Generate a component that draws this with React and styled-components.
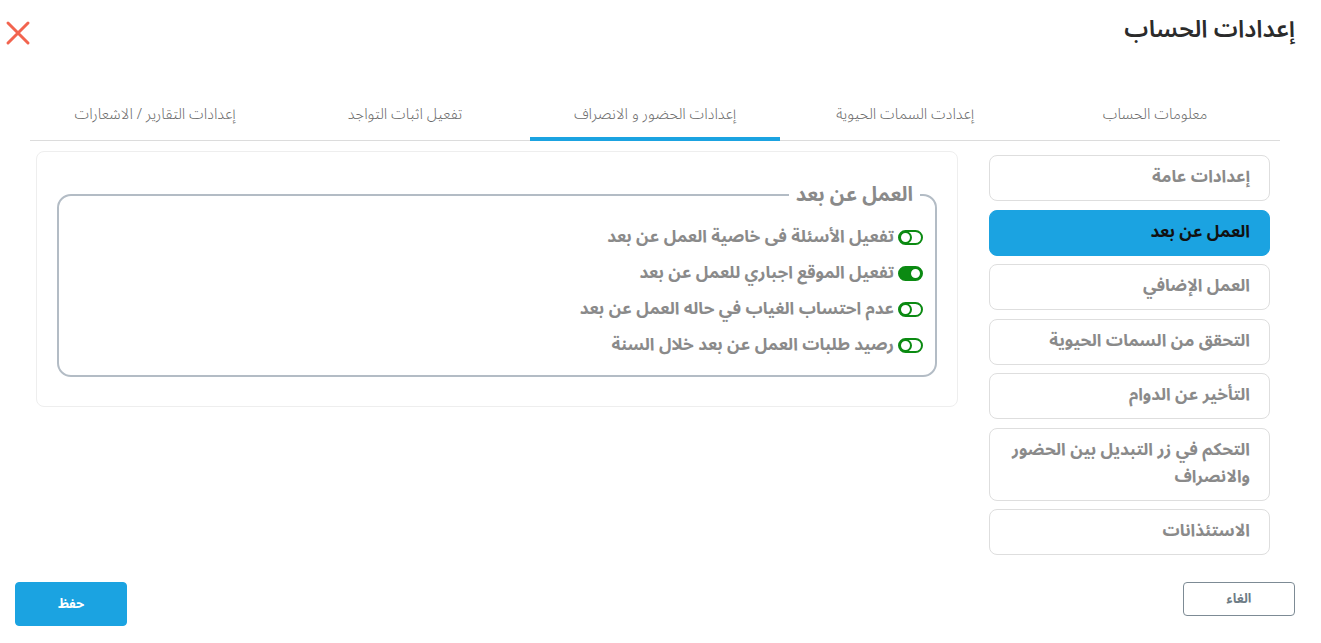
import React, { useState } from "react";
import styled, { createGlobalStyle } from "styled-components";

const Global = createGlobalStyle`
  html, body { margin: 0; padding: 0; background: #fff; }
  body { font-family: "Noto Sans Arabic", "DejaVu Sans", "Noto Sans", sans-serif; }
  * { box-sizing: border-box; }
`;

const Page = styled.div`
  direction: rtl;
  width: 1321px;
  height: 643px;
  display: flex;
  flex-direction: column;
  background: #fff;
`;

const Header = styled.header`
  display: flex;
  justify-content: space-between;
  align-items: flex-start;
  padding: 12px 26px 0 5px;
  height: 95px;
`;

const Title = styled.h1`
  margin: 0;
  font-size: 24px;
  font-weight: 600;
  color: #2b2b2b;
  line-height: 36px;
`;

const CloseBtn = styled.button`
  border: 0;
  background: none;
  padding: 0;
  margin-top: 8px;
  width: 26px;
  height: 26px;
  cursor: pointer;
  display: flex;
`;

const Tabs = styled.nav`
  display: grid;
  grid-template-columns: repeat(5, 250px);
  margin: 0 41px 0 30px;
  border-bottom: 1px solid #dcdcdc;
`;

const Tab = styled.div`
  height: 46px;
  display: flex;
  align-items: center;
  justify-content: center;
  padding-bottom: 4px;
  font-size: 15px;
  font-weight: 300;
  color: #6a6a6a;
  border-bottom: 4px solid ${(p) => (p.$active ? "#1ba3e1" : "transparent")};
  margin-bottom: -1px;
`;

const Body = styled.div`
  display: grid;
  grid-template-columns: 281px 922px;
  column-gap: 31px;
  padding: 10px 51px 0 36px;
  align-items: start;
`;

const Side = styled.div`
  display: flex;
  flex-direction: column;
  gap: 8.5px;
  padding-top: 4px;
`;

const SideItem = styled.div`
  min-height: 46px;
  border-radius: 8px;
  border: 1px solid ${(p) => (p.$active ? "#1ba3e1" : "#dedede")};
  background: ${(p) => (p.$active ? "#1ba3e1" : "#fff")};
  color: ${(p) => (p.$active ? "#111" : "#8a8a8a")};
  font-size: 17px;
  font-weight: 700;
  line-height: 27px;
  padding: 8px 19px 9px 12px;
  display: flex;
  align-items: center;
`;

const Panel = styled.div`
  border: 1px solid #eeeeee;
  border-radius: 8px;
  height: 256px;
  padding: 30px 20px 0 20px;
`;

const Fieldset = styled.fieldset`
  margin: 0;
  border: 2px solid #b3bcc5;
  border-radius: 14px;
  padding: 11px 12px 9px 12px;
  height: 195px;
`;

const Legend = styled.legend`
  font-size: 20px;
  font-weight: 700;
  color: #8a8a8a;
  padding: 0 7px;
  margin-right: 3px;
  line-height: 26px;
`;

const Rows = styled.div`
  display: flex;
  flex-direction: column;
`;

const Row = styled.label`
  display: flex;
  align-items: center;
  gap: 4px;
  height: 36px;
  font-size: 17px;
  font-weight: 700;
  color: #8a8a8a;
  cursor: pointer;
`;

const Toggle = styled.span`
  width: 25px;
  height: 15px;
  border-radius: 8px;
  border: 2px solid #0b8a12;
  background: ${(p) => (p.$on ? "#0b8a12" : "#fff")};
  display: flex;
  flex-direction: ${(p) => (p.$on ? "row" : "row-reverse")};
  justify-content: flex-start;
  align-items: center;
  flex-shrink: 0;
  direction: rtl;
`;

const Knob = styled.span`
  width: 13px;
  height: 13px;
  margin: -1px;
  border-radius: 50%;
  background: #fff;
  border: 2px solid #0b8a12;
`;

const Footer = styled.footer`
  margin-top: auto;
  display: flex;
  justify-content: space-between;
  align-items: flex-start;
  padding: 0 26px 17px 15px;
`;

const Button = styled.button`
  width: 112px;
  height: ${(p) => (p.$primary ? "44px" : "34px")};
  border-radius: 4px;
  font-family: inherit;
  font-size: 13px;
  font-weight: 700;
  cursor: pointer;
  border: 1px solid ${(p) => (p.$primary ? "#1ba3e1" : "#7d8b95")};
  background: ${(p) => (p.$primary ? "#1ba3e1" : "#fff")};
  color: ${(p) => (p.$primary ? "#fff" : "#6e7c86")};
`;

const tabs = [
  "معلومات الحساب",
  "إعدادت السمات الحيوية",
  "إعدادات الحضور و الانصراف",
  "تفعيل اثبات التواجد",
  "إعدادات التقارير / الاشعارات",
];

const sideItems = [
  "إعدادات عامة",
  "العمل عن بعد",
  "العمل الإضافي",
  "التحقق من السمات الحيوية",
  "التأخير عن الدوام",
  "التحكم في زر التبديل بين الحضور والانصراف",
  "الاستئذانات",
];

const options = [
  { label: "تفعيل الأسئلة فى خاصية العمل عن بعد", on: false },
  { label: "تفعيل الموقع اجباري للعمل عن بعد", on: true },
  { label: "عدم احتساب الغياب في حاله العمل عن بعد", on: false },
  { label: "رصيد طلبات العمل عن بعد خلال السنة", on: false },
];

export default function App() {
  const [opts, setOpts] = useState(options);
  return (
    <Page>
      <Global />
      <Header>
        <Title>إعدادات الحساب</Title>
        <CloseBtn aria-label="close">
          <svg width="26" height="26" viewBox="0 0 26 26">
            <path d="M3 3 L23 23 M23 3 L3 23" stroke="#f2644f" strokeWidth="3" strokeLinecap="round" />
          </svg>
        </CloseBtn>
      </Header>
      <Tabs>
        {tabs.map((t, i) => (
          <Tab key={t} $active={i === 2}>{t}</Tab>
        ))}
      </Tabs>
      <Body>
        <Side>
          {sideItems.map((s, i) => (
            <SideItem key={s} $active={i === 1}>{s}</SideItem>
          ))}
        </Side>
        <Panel>
          <Fieldset>
            <Legend>العمل عن بعد</Legend>
            <Rows>
              {opts.map((o, i) => (
                <Row
                  key={o.label}
                  onClick={() =>
                    setOpts(opts.map((x, j) => (j === i ? { ...x, on: !x.on } : x)))
                  }
                >
                  <Toggle $on={o.on}><Knob /></Toggle>
                  {o.label}
                </Row>
              ))}
            </Rows>
          </Fieldset>
        </Panel>
      </Body>
      <Footer>
        <Button>الغاء</Button>
        <Button $primary>حفظ</Button>
      </Footer>
    </Page>
  );
}
